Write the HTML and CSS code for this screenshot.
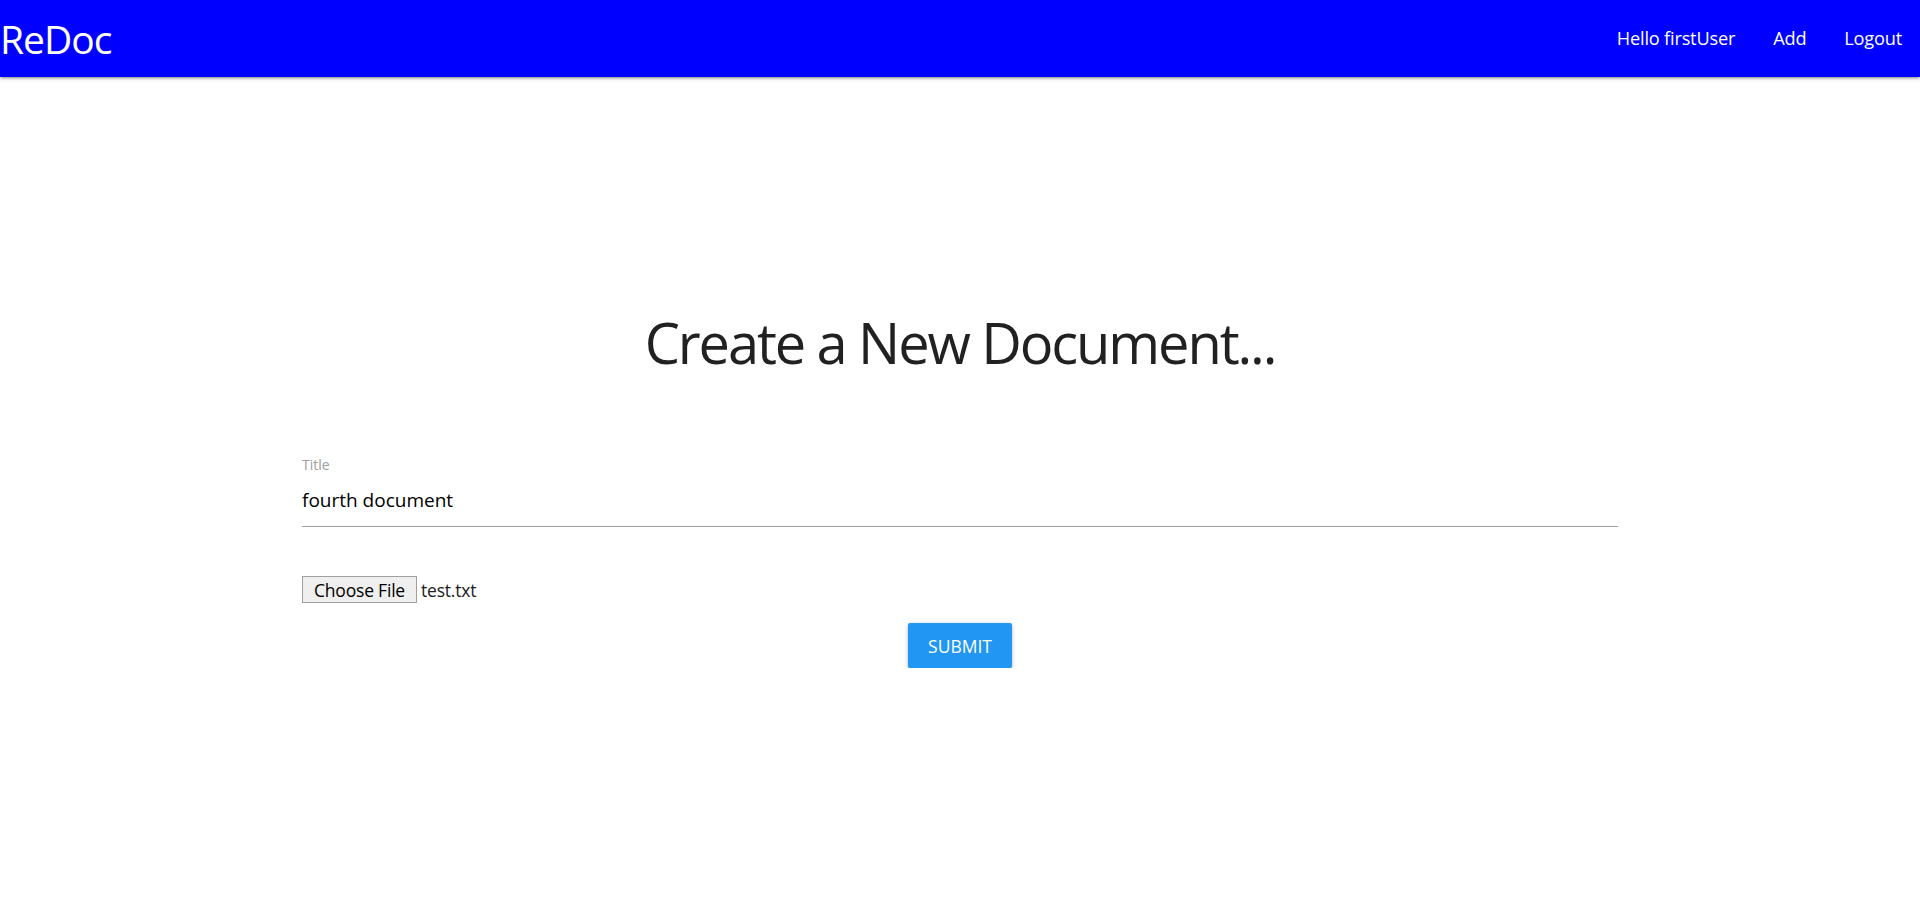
FILE: index.html
```html
<!DOCTYPE html>
<html lang="en">
<head>
<meta charset="utf-8">
<title>ReDoc</title>
<link rel="stylesheet" href="styles.css">
</head>
<body>
<header class="nav">
  <a class="brand" href="#">ReDoc</a>
  <ul class="nav-links">
    <li><a href="#">Hello firstUser</a></li>
    <li><a href="#">Add</a></li>
    <li><a href="#">Logout</a></li>
  </ul>
</header>
<main class="main">
  <h1 class="page-title">Create a New Document...</h1>
  <form class="doc-form">
    <div class="field">
      <label class="field-label" for="title">Title</label>
      <input class="field-input" id="title" type="text" value="fourth document">
    </div>
    <div class="file-row">
      <button type="button" class="file-btn">Choose File</button>
      <span class="file-name">test.txt</span>
    </div>
    <div class="submit-row">
      <button type="submit" class="submit-btn">SUBMIT</button>
    </div>
  </form>
</main>
</body>
</html>
```
FILE: styles.css
```css
* { box-sizing: border-box; }
html, body { margin: 0; padding: 0; background: #fff; }
body {
  font-family: "Open Sans", "Noto Sans", sans-serif;
  color: #212121;
}
.nav {
  height: 77px;
  background: #0000ff;
  display: flex;
  align-items: center;
  justify-content: space-between;
  box-shadow: 0 2px 2px 0 rgba(0,0,0,0.14), 0 3px 1px -2px rgba(0,0,0,0.12), 0 1px 5px 0 rgba(0,0,0,0.2);
  position: relative;
  z-index: 1;
}
.brand {
  color: #fff;
  text-decoration: none;
  font-size: 39px;
  letter-spacing: -1px;
  padding-left: 0;
  line-height: 77px;
}
.nav-links {
  list-style: none;
  margin: 0;
  padding: 0;
  display: flex;
}
.nav-links a {
  display: block;
  color: #fff;
  text-decoration: none;
  font-size: 18.2px;
  padding: 0 19px;
  line-height: 77px;
  letter-spacing: -0.2px;
}
.nav-links li:last-child a {
  padding-right: 18px;
}
.main {
  padding-top: 229px;
}
.page-title {
  margin: 0;
  text-align: center;
  font-weight: 400;
  font-size: 56px;
  line-height: 72px;
  letter-spacing: -2.1px;
  color: #212121;
}
.doc-form {
  width: 1316px;
  margin: 0 auto;
  padding-top: 78px;
}
.field {
  display: flex;
  flex-direction: column;
}
.field-label {
  font-size: 14px;
  color: #9e9e9e;
  line-height: 18px;
}
.field-input {
  border: none;
  border-bottom: 1px solid #9e9e9e;
  outline: none;
  font-family: inherit;
  font-size: 19px;
  color: #000;
  padding: 0;
  height: 53px;
  margin-top: 0;
  background: transparent;
  letter-spacing: 0;
}
.file-row {
  display: flex;
  align-items: center;
  margin-top: 49px;
  gap: 4px;
}
.file-btn {
  font-family: inherit;
  font-size: 17.5px;
  color: #000;
  background: #efefef;
  border: 1px solid #a0a0a0;
  border-radius: 0;
  height: 27px;
  width: 115px;
  padding: 0;
  letter-spacing: -0.2px;
}
.file-name {
  font-size: 17.5px;
  color: #212121;
  letter-spacing: -0.2px;
}
.submit-row {
  display: flex;
  justify-content: center;
  margin-top: 20px;
}
.submit-btn {
  width: 104px;
  height: 45px;
  background: #2196f3;
  color: #fff;
  border: none;
  border-radius: 2px;
  font-family: inherit;
  font-size: 17.5px;
  letter-spacing: 0;
  box-shadow: 0 2px 2px 0 rgba(0,0,0,0.14), 0 3px 1px -2px rgba(0,0,0,0.12), 0 1px 5px 0 rgba(0,0,0,0.2);
}
```
